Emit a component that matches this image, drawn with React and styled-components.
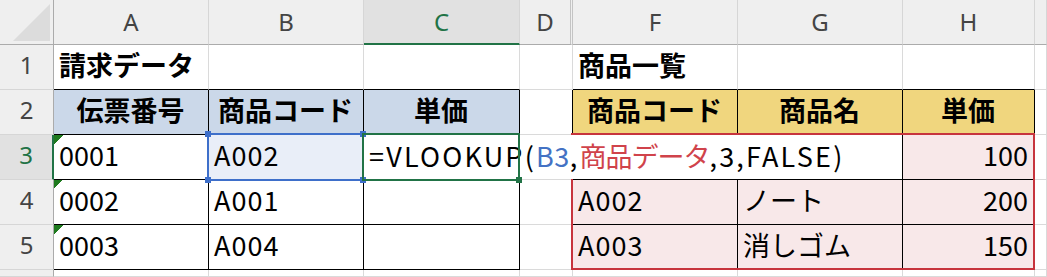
import React from 'react';
import styled, { createGlobalStyle, css } from 'styled-components';

const Global = createGlobalStyle`
  html, body { margin: 0; padding: 0; background: #fff; overflow: hidden; }
  #root { width: 1047px; height: 277px; }
`;

const BLACK = '#000';
const GRID = '#dadada';
const BLUE_HEAD = '#cbd8e9';
const YELLOW_HEAD = '#f0d67e';
const PINK = '#f8e8e9';
const SEL_FILL = '#e9eef8';
const XL_GREEN = '#217346';
const REF_BLUE = '#3e6fca';
const REF_RED = '#c7343d';

const CELL_FONT = `"Noto Sans CJK JP", "Noto Sans", sans-serif`;
const HEAD_FONT = `"Noto Sans", "Noto Sans CJK JP", sans-serif`;

const Sheet = styled.div`
  display: grid;
  grid-template-columns: 54px 155px 155px 156px 53px 165px 165px 132px 1fr;
  grid-template-rows: 45px repeat(5, 45px) 1fr;
  width: 1047px;
  height: 277px;
  overflow: hidden;
  font-family: ${CELL_FONT};
`;

const Corner = styled.div`
  grid-column: 1;
  grid-row: 1;
  box-sizing: border-box;
  background: #efefef;
  border-right: 1px solid #ababab;
  border-bottom: 1px solid #ababab;
  display: flex;
`;

const ColHead = styled.div`
  grid-column: ${p => p.$c};
  grid-row: 1;
  box-sizing: border-box;
  background: ${p => (p.$sel ? '#e1e1e1' : '#efefef')};
  border-right: ${p => (p.$hiddenNext ? '3px double #c4c4c4' : '1px solid #d6d6d6')};
  border-bottom: ${p => (p.$sel ? `2px solid ${XL_GREEN}` : '1px solid #ababab')};
  color: ${p => (p.$sel ? XL_GREEN : '#444')};
  font-family: ${HEAD_FONT};
  font-size: 24px;
  display: flex;
  align-items: center;
  justify-content: center;
  padding-bottom: 1px;
`;

const RowHead = styled.div`
  grid-column: 1;
  grid-row: ${p => p.$r};
  box-sizing: border-box;
  background: ${p => (p.$sel ? '#e1e1e1' : '#efefef')};
  border-right: ${p => (p.$sel ? `2px solid ${XL_GREEN}` : '1px solid #ababab')};
  border-bottom: 1px solid #d6d6d6;
  color: ${p => (p.$sel ? XL_GREEN : '#444')};
  font-family: ${HEAD_FONT};
  font-size: 24px;
  display: flex;
  align-items: center;
  justify-content: center;
  padding-bottom: 5px;
`;

const Cell = styled.div`
  grid-column: ${p => p.$c};
  grid-row: ${p => p.$r};
  box-sizing: border-box;
  min-width: 0;
  border-right: 1px solid ${p => p.$br || GRID};
  border-bottom: 1px solid ${p => p.$bb || GRID};
  background-color: ${p => p.$bg || '#fff'};
  display: flex;
  align-items: center;
  justify-content: ${p =>
    p.$align === 'center' ? 'center' : p.$align === 'right' ? 'flex-end' : 'flex-start'};
  padding: 0 6px 5px 5px;
  font-size: 27px;
  font-weight: ${p => (p.$bold ? 700 : 400)};
  letter-spacing: ${p => (p.$latin ? '1px' : '0')};
  color: #000;
  white-space: nowrap;
  overflow: hidden;
  ${p =>
    p.$flag &&
    css`
      background-image: linear-gradient(135deg, #1f7a1f 0 50%, transparent 50%);
      background-size: 9px 9px;
      background-repeat: no-repeat;
    `}
`;

const RefBox = styled.div`
  grid-column: ${p => p.$c};
  grid-row: ${p => p.$r};
  box-sizing: border-box;
  margin: -2px 0 ${p => p.$mb || '0'} -2px;
  border: 2px solid ${p => p.$color};
  position: relative;
  z-index: ${p => p.$z};
  pointer-events: none;
`;

const Handle = styled.span`
  position: absolute;
  width: 6px;
  height: 6px;
  background: ${p => p.$color};
  ${p => (p.$top ? 'top: -4px;' : 'bottom: -4px;')}
  ${p => (p.$left ? 'left: -4px;' : 'right: -4px;')}
`;

const Editor = styled.div`
  grid-column: 4 / 8;
  grid-row: 4;
  margin: 0 1px 1px 0;
  background: #fff;
  z-index: 2;
  display: flex;
  align-items: center;
  padding: 0 0 4px 5px;
  font-size: 27px;
  color: #000;
  white-space: nowrap;
`;

const Tok = styled.span`
  color: ${p => p.$color || '#000'};
  letter-spacing: ${p => p.$ls || '2.2px'};
`;

const B = BLACK;
const hdr = (t, bg) => ({ t, bold: true, align: 'center', bg, br: B, bb: B });
const tc = (t, extra = {}) => ({ t, br: B, bb: B, ...extra });

const rows = [
  [
    { t: '請求データ', bold: true, bb: B },
    { bb: B },
    { bb: B },
    {},
    { t: '商品一覧', bold: true, bb: B },
    { bb: B },
    { bb: B },
    {},
  ],
  [
    hdr('伝票番号', BLUE_HEAD),
    hdr('商品コード', BLUE_HEAD),
    hdr('単価', BLUE_HEAD),
    { br: B },
    hdr('商品コード', YELLOW_HEAD),
    hdr('商品名', YELLOW_HEAD),
    hdr('単価', YELLOW_HEAD),
    {},
  ],
  [
    tc('0001', { flag: true }),
    tc('A002', { bg: SEL_FILL, latin: true }),
    tc(''),
    { br: B },
    tc('', { bg: PINK }),
    tc('', { bg: PINK }),
    tc('100', { bg: PINK, align: 'right' }),
    {},
  ],
  [
    tc('0002', { flag: true }),
    tc('A001', { latin: true }),
    tc(''),
    { br: B },
    tc('A002', { bg: PINK, latin: true }),
    tc('ノート', { bg: PINK }),
    tc('200', { bg: PINK, align: 'right' }),
    {},
  ],
  [
    tc('0003', { flag: true }),
    tc('A004', { latin: true }),
    tc(''),
    { br: B },
    tc('A003', { bg: PINK, latin: true }),
    tc('消しゴム', { bg: PINK }),
    tc('150', { bg: PINK, align: 'right' }),
    {},
  ],
  [{}, {}, {}, {}, {}, {}, {}, {}],
];

const colLabels = ['A', 'B', 'C', 'D', 'F', 'G', 'H', ''];

export default function App() {
  return (
    <>
      <Global />
      <Sheet>
        <Corner>
          <svg width="53" height="44" viewBox="0 0 53 44">
            <polygon points="13,41 50,41 50,4" fill="#dcdcdc" />
          </svg>
        </Corner>
        {colLabels.map((l, i) => (
          <ColHead key={i} $c={i + 2} $sel={l === 'C'} $hiddenNext={l === 'D'}>
            {l}
          </ColHead>
        ))}
        {rows.map((row, ri) => (
          <React.Fragment key={ri}>
            <RowHead $r={ri + 2} $sel={ri === 2}>
              {ri < 5 ? ri + 1 : ''}
            </RowHead>
            {row.map((c, ci) => (
              <Cell
                key={ci}
                $r={ri + 2}
                $c={ci + 2}
                $br={c.br}
                $bb={c.bb}
                $bg={c.bg}
                $bold={c.bold}
                $align={c.align}
                $flag={c.flag}
                $latin={c.latin}
              >
                {c.t}
              </Cell>
            ))}
          </React.Fragment>
        ))}

        <RefBox $c="6 / 9" $r="4 / 7" $color={REF_RED} $z={1} />

        <Editor>
          <Tok>=VLOOKUP(</Tok>
          <Tok $color="#4472c4" $ls="0.5px">B3</Tok>
          <Tok>,</Tok>
          <Tok $color="#d0434b" $ls="-1px">商品データ</Tok>
          <Tok>,3,FALSE)</Tok>
        </Editor>

        <RefBox $c="3" $r="4" $color={REF_BLUE} $z={3} $mb="-1px">
          <Handle $color={REF_BLUE} $top $left />
          <Handle $color={REF_BLUE} $left />
          <Handle $color={REF_BLUE} $top />
          <Handle $color={REF_BLUE} />
        </RefBox>

        <RefBox $c="4" $r="4" $color={XL_GREEN} $z={4} $mb="-1px">
          <Handle $color={XL_GREEN} />
        </RefBox>
      </Sheet>
    </>
  );
}
